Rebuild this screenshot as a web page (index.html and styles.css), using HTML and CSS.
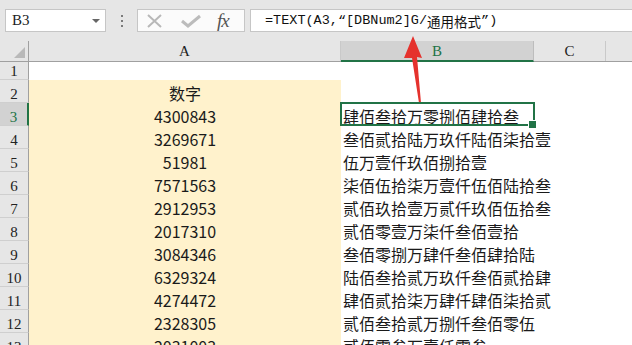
FILE: index.html
```html
<!DOCTYPE html>
<html>
<head>
<meta charset="utf-8">
<link rel="stylesheet" href="styles.css">
</head>
<body>
<div class="app">
  <div class="toolbar">
    <div class="namebox"><span class="nb-text">B3</span><span class="caret"></span></div>
    <div class="grip"><i></i><i></i><i></i></div>
    <div class="fxbox">
      <svg class="ico" width="20" height="14" viewBox="0 0 20 14"><path d="M3 1 L16 13 M16 1 L3 13" stroke="#b8b8b8" stroke-width="2" fill="none"/></svg>
      <svg class="ico" width="22" height="14" viewBox="0 0 22 14"><path d="M2 7 L8 12 L20 2" stroke="#bcbcbc" stroke-width="3" fill="none"/></svg>
      <span class="fx">fx</span>
    </div>
    <div class="formula"><span class="mono">=TEXT(A3,“[DBNum2]G/</span><span class="cjk">通用格式</span><span class="mono">”)</span></div>
  </div>

  <div class="sheet">
    <div class="hdr">
      <div class="corner"><span class="tri"></span></div>
      <div class="ch ca">A</div>
      <div class="ch cb sel">B</div>
      <div class="ch cc">C</div>
      <div class="ch cd"></div>
    </div>

    <div class="row r1"><div class="rh">1</div><div class="c a blank"></div><div class="c b"></div><div class="c cc"></div></div>
    <div class="row"><div class="rh">2</div><div class="c a">数字</div><div class="c b"></div><div class="c cc"></div></div>
    <div class="row"><div class="rh sel">3</div><div class="c a">4300843</div><div class="c b active">肆佰叁拾万零捌佰肆拾叁</div><div class="c cc"></div></div>
    <div class="row"><div class="rh">4</div><div class="c a">3269671</div><div class="c b">叁佰贰拾陆万玖仟陆佰柒拾壹</div><div class="c cc"></div></div>
    <div class="row"><div class="rh">5</div><div class="c a">51981</div><div class="c b">伍万壹仟玖佰捌拾壹</div><div class="c cc"></div></div>
    <div class="row"><div class="rh">6</div><div class="c a">7571563</div><div class="c b">柒佰伍拾柒万壹仟伍佰陆拾叁</div><div class="c cc"></div></div>
    <div class="row"><div class="rh">7</div><div class="c a">2912953</div><div class="c b">贰佰玖拾壹万贰仟玖佰伍拾叁</div><div class="c cc"></div></div>
    <div class="row"><div class="rh">8</div><div class="c a">2017310</div><div class="c b">贰佰零壹万柒仟叁佰壹拾</div><div class="c cc"></div></div>
    <div class="row"><div class="rh">9</div><div class="c a">3084346</div><div class="c b">叁佰零捌万肆仟叁佰肆拾陆</div><div class="c cc"></div></div>
    <div class="row"><div class="rh">10</div><div class="c a">6329324</div><div class="c b">陆佰叁拾贰万玖仟叁佰贰拾肆</div><div class="c cc"></div></div>
    <div class="row"><div class="rh">11</div><div class="c a">4274472</div><div class="c b">肆佰贰拾柒万肆仟肆佰柒拾贰</div><div class="c cc"></div></div>
    <div class="row"><div class="rh">12</div><div class="c a">2328305</div><div class="c b">贰佰叁拾贰万捌仟叁佰零伍</div><div class="c cc"></div></div>
    <div class="row"><div class="rh">13</div><div class="c a">2031003</div><div class="c b">贰佰零叁万壹仟零叁</div><div class="c cc"></div></div>
  </div>

  <svg class="arrow" width="30" height="80" viewBox="0 0 30 80">
    <polygon points="13,6 22,28 17,27 21,73 19,73 12,28 4,28" fill="#e5322d"/>
  </svg>
</div>
</body>
</html>
```

FILE: styles.css
```css
* { box-sizing: border-box; margin: 0; padding: 0; }
html, body { width: 632px; height: 345px; overflow: hidden; }
body { background: #ffffff; }

.app {
  position: relative;
  width: 632px;
  height: 345px;
  overflow: hidden;
  background: #ffffff;
}

/* ---------- formula bar ---------- */
.toolbar {
  display: flex;
  align-items: flex-start;
  height: 41px;
  padding: 9px 0 0 5px;
  background: #e6e6e6;
}
.namebox {
  position: relative;
  display: flex;
  align-items: center;
  width: 101px;
  height: 23px;
  background: #fff;
  border: 1px solid #c6c6c6;
  padding-left: 6px;
  font: 15px "Liberation Serif", serif;
  color: #222;
}
.caret {
  margin-left: auto;
  margin-right: 5px;
  width: 0;
  height: 0;
  border-left: 4px solid transparent;
  border-right: 4px solid transparent;
  border-top: 4px solid #666;
}
.grip {
  width: 31px;
  height: 23px;
  display: flex;
  flex-direction: column;
  align-items: center;
  justify-content: center;
  gap: 3px;
}
.grip i {
  display: block;
  width: 2px;
  height: 2px;
  background: #7a7a7a;
}
.fxbox {
  display: flex;
  align-items: center;
  width: 108px;
  height: 23px;
  background: #fbfbfb;
  border: 1px solid #c6c6c6;
  padding-left: 7px;
  gap: 15px;
}
.fxbox .ico { display: block; }
.fx {
  font: italic 19px "Liberation Serif", serif;
  color: #555;
  letter-spacing: -1px;
}
.formula {
  flex: 1;
  height: 23px;
  margin-left: 5px;
  background: #fff;
  border: 1px solid #c6c6c6;
  border-right: none;
  padding-left: 14px;
  display: flex;
  align-items: center;
  white-space: nowrap;
  color: #111;
}
.mono { font: 13.5px "Liberation Mono", monospace; }
.cjk { font: 13.5px "Noto Sans CJK SC", sans-serif; }

/* ---------- sheet ---------- */
.sheet { background: #fff; }

.hdr {
  display: flex;
  height: 21px;
  background: #e6e6e6;
  border-bottom: 1px solid #a0a0a0;
}
.corner {
  position: relative;
  width: 29px;
  border-right: 1px solid #a0a0a0;
}
.tri {
  position: absolute;
  right: 3px;
  bottom: 3px;
  width: 0;
  height: 0;
  border-left: 11px solid transparent;
  border-bottom: 11px solid #b9b9b9;
}
.ch {
  display: flex;
  align-items: center;
  justify-content: center;
  font: 15px "Liberation Serif", serif;
  color: #222;
  border-right: 1px solid #c9c9c9;
  padding-top: 1px;
}
.ca { width: 312px; }
.cb { width: 193px; }
.cc { width: 72px; }
.cd { flex: 1; border-right: none; }
.ch.sel {
  background: #d2d2d2;
  color: #217346;
  border-bottom: 2px solid #217346;
  border-right-color: #bdbdbd;
  margin-bottom: -1px;
}

.row {
  display: flex;
  height: 23px;
}
.row.r1 { height: 18px; }

.rh {
  width: 29px;
  flex: none;
  background: #e6e6e6;
  border-right: 1px solid #a0a0a0;
  border-bottom: 1px solid #cfcfcf;
  display: flex;
  align-items: flex-end;
  justify-content: center;
  font: 15px/15px "Liberation Serif", serif;
  color: #222;
}
.rh.sel {
  background: #d2d2d2;
  color: #217346;
  border-right: 2px solid #217346;
}

.c {
  flex: none;
  display: flex;
  align-items: flex-end;
  font: 16px/20px "Noto Sans CJK SC", sans-serif;
  color: #1a1a1a;
  white-space: nowrap;
}
.c.a {
  width: 312px;
  justify-content: center;
  background: #fff2cc;
}
.c.a.blank { background: #fff; }
.c.b {
  width: 193px;
  padding-left: 2px;
  position: relative;
  z-index: 1;
}
.c.cc { width: 72px; }

.c.b.active::after {
  content: "";
  position: absolute;
  left: -1px;
  top: -1px;
  right: -1px;
  bottom: 0;
  border: 2px solid #217346;
}
.c.b.active::before {
  content: "";
  position: absolute;
  right: -3px;
  bottom: -3px;
  width: 7px;
  height: 7px;
  background: #217346;
  border: 1px solid #fff;
  z-index: 2;
}

.arrow {
  position: absolute;
  left: 400px;
  top: 30px;
}
```
